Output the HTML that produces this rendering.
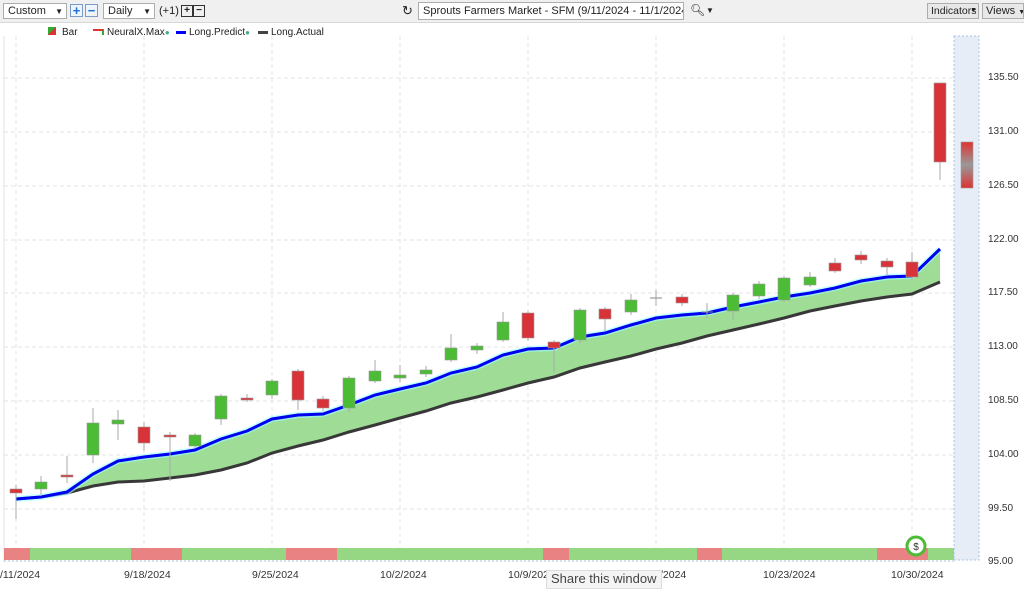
<!DOCTYPE html>
<html><head><meta charset="utf-8"><style>
body{margin:0;width:1024px;height:587px;overflow:hidden;background:#fff;font-family:"Liberation Sans",sans-serif;position:relative;white-space:nowrap}
.tb{position:absolute;left:0;top:0;width:1024px;height:22px;background:#f0f0f0;border-bottom:1px solid #d8d8d8;font-size:11px;color:#222}
.box{position:absolute;top:3px;height:16px;border:1px solid #adadad;background:#fff;line-height:15px;padding-left:4px;box-sizing:border-box;overflow:hidden}
.btn{position:absolute;top:3px;height:16px;border:1px solid #adadad;background:#e8e8e8;line-height:14px;padding:0 3px;box-sizing:border-box;overflow:hidden}
.sq{position:absolute;top:4px;width:13px;height:13px;border:1px solid #7a9cc6;background:#eef4fb;color:#1e6fd0;font-weight:bold;text-align:center;line-height:12px;font-size:13px;box-sizing:border-box}
.leg{position:absolute;top:27px;font-size:10px;color:#222}
.ax{position:absolute;left:988px;font-size:10px;color:#333}
.dt{position:absolute;top:569px;font-size:10.5px;color:#333}
</style></head><body>
<div class="tb">
<div class="box" style="left:3px;width:64px">Custom<span style="position:absolute;right:3px;font-size:8px">▼</span></div>
<div class="sq" style="left:70px">+</div><div class="sq" style="left:85px">−</div>
<div class="box" style="left:103px;width:52px">Daily<span style="position:absolute;right:3px;font-size:8px">▼</span></div>
<span style="position:absolute;left:159px;top:5px">(+1)</span>
<div style="position:absolute;left:181px;top:5px;width:10px;height:10px;border:1px solid #333;font-size:10px;line-height:9px;text-align:center;font-weight:bold">+</div>
<div style="position:absolute;left:193px;top:5px;width:10px;height:10px;border:1px solid #333;font-size:10px;line-height:9px;text-align:center;font-weight:bold">−</div>
<span style="position:absolute;left:402px;top:3px;font-size:13px">↻</span>
<div class="box" style="left:418px;width:266px;height:18px;top:2px;font-size:11px;line-height:17px">Sprouts Farmers Market - SFM (9/11/2024 - 11/1/2024)</div>
<span style="position:absolute;left:690px;top:3px;font-size:12px">🔍︎</span><span style="position:absolute;left:706px;top:6px;font-size:8px">▼</span>
<div class="btn" style="left:927px;width:52px;font-size:10.5px">Indicators<span style="position:absolute;right:1px;font-size:7px">▼</span></div>
<div class="btn" style="left:982px;width:42px">Views <span style="font-size:7px">▼</span></div>
</div>
<div class="leg" style="left:48px"><span style="display:inline-block;width:8px;height:8px;background:linear-gradient(135deg,#3a3 50%,#d33 50%);margin-right:6px"></span>Bar</div>
<div class="leg" style="left:93px"><span style="display:inline-block;width:9px;height:4px;border-top:2px solid #d33;border-right:2px solid #3a3;margin-right:3px"></span>NeuralX.Max<span style="color:#4a8;font-size:8px">●</span></div>
<div class="leg" style="left:176px"><span style="display:inline-block;width:10px;height:3px;background:#00f;margin-right:3px;vertical-align:middle"></span>Long.Predict<span style="color:#4a8;font-size:8px">●</span></div>
<div class="leg" style="left:258px"><span style="display:inline-block;width:10px;height:3px;background:#444;margin-right:3px;vertical-align:middle"></span>Long.Actual</div>
<svg id="c" width="1024" height="587" style="position:absolute;left:0;top:0"></svg>
<div class="ax" style="top:72px">135.50</div><div class="ax" style="top:126px">131.00</div><div class="ax" style="top:180px">126.50</div><div class="ax" style="top:234px">122.00</div><div class="ax" style="top:287px">117.50</div><div class="ax" style="top:341px">113.00</div><div class="ax" style="top:395px">108.50</div><div class="ax" style="top:449px">104.00</div><div class="ax" style="top:503px">99.50</div><div class="ax" style="top:556px">95.00</div>
<div class="dt" style="left:0">/11/2024</div><div class="dt" style="left:124px">9/18/2024</div><div class="dt" style="left:252px">9/25/2024</div><div class="dt" style="left:380px">10/2/2024</div><div class="dt" style="left:508px">10/9/202</div><div class="dt" style="left:660px">/2024</div><div class="dt" style="left:763px">10/23/2024</div><div class="dt" style="left:891px">10/30/2024</div>
<div style="position:absolute;left:546px;top:570px;width:110px;height:17px;background:#f4f4f4;border:1px solid #ddd;font-size:13px;color:#444;padding-left:4px">Share this window</div>
<script>
const s=document.getElementById('c');let h='';
h+='<rect x="954" y="36" width="25" height="524" fill="#e6edf6" stroke="#a8c4e0" stroke-dasharray="2,2"/>';
[78,132,186,240,293,347,401,455,509].forEach(y=>h+=`<line x1="4" x2="954" y1="${y}" y2="${y}" stroke="#e3e3e3" stroke-dasharray="4,3"/>`);
[16,144,272,400,528,656,784,912].forEach(x=>h+=`<line x1="${x}" x2="${x}" y1="36" y2="562" stroke="#e3e3e3" stroke-dasharray="4,3"/>`);
h+='<line x1="4" x2="4" y1="36" y2="562" stroke="#e3e3e3"/>';
const X=[16,41,67,93,118,144,170,195,221,247,272,298,323,349,375,400,426,451,477,503,528,554,580,605,631,656,682,707,733,759,784,810,835,861,887,912,940];
const P=[499,497,492,474,461,457,454,450,439,431,419,415,414,405,395,389,383,373,367,355,349,348,337,333,325,318,315,313,307,302,297,293,288,281,277,276,249];
const A=[499,497,493,486,482,481,478,475,470,463,453,446,440,432,425,418,411,403,397,390,383,377,368,362,356,349,343,336,330,324,318,311,306,301,297,294,282];
let pp=X.map((x,i)=>x+','+P[i]).join(' '),ap=X.map((x,i)=>x+','+A[i]).join(' ');
h+=`<polygon points="${pp} ${X.slice().reverse().map((x,i)=>x+','+A[A.length-1-i]).join(' ')}" fill="#9fdc96"/>`;
h+=`<polyline points="${ap}" fill="none" stroke="#383838" stroke-width="3"/>`;
h+=`<polyline points="${pp}" fill="none" stroke="#9ff" stroke-width="6" opacity=".6"/><polyline points="${pp}" fill="none" stroke="#0000f0" stroke-width="3"/>`;
const C=[['r',489,493,485,519],['g',482,489,476,496],['r',475,477,456,483],['g',423,455,408,463],['g',420,424,410,440],['r',427,443,422,451],['r',435,437,432,481],['g',435,446,433,448],['g',396,419,394,425],['r',398,399,394,402],['g',381,395,379,399],['r',371,400,369,410],['r',399,408,396,411],['g',378,408,376,412],['g',371,381,360,383],['g',375,378,365,382],['g',370,374,366,377],['g',348,360,334,362],['g',346,350,343,354],['g',322,340,312,342],['r',313,338,311,341],['r',342,348,340,372],['g',310,340,308,343],['r',309,319,307,331],['g',300,312,294,315],['x',298,299,290,306],['r',297,303,294,306],['x',312,313,303,318],['g',295,311,293,320],['g',284,296,281,299],['g',278,300,276,302],['g',277,285,272,287],['r',263,271,258,273],['r',255,260,251,264],['r',261,267,258,276],['r',262,277,252,280],['r',83,162,83,180]];
C.forEach((c,i)=>{const x=X[i],col=c[0]=='g'?'#4cbb35':c[0]=='r'?'#d9333a':'#888';
h+=`<line x1="${x}" x2="${x}" y1="${c[3]}" y2="${c[4]}" stroke="#aaa"/>`;
if(c[0]=='x')h+=`<line x1="${x-6}" x2="${x+6}" y1="${c[1]}" y2="${c[1]}" stroke="#888"/>`;
else h+=`<rect x="${x-6}" y="${c[1]}" width="12" height="${Math.max(2,c[2]-c[1])}" fill="${col}" stroke="#999" stroke-width=".6"/>`;});
h+='<defs><linearGradient id="gg" x1="0" y1="0" x2="0" y2="1"><stop offset="0" stop-color="#d33"/><stop offset=".5" stop-color="#999"/><stop offset="1" stop-color="#d33"/></linearGradient></defs><rect x="961" y="142" width="12" height="46" fill="url(#gg)" stroke="#999" stroke-width=".6"/>';
h+='<rect x="4" y="548" width="950" height="12" fill="#95d782"/>';
[[4,30],[131,182],[286,337],[543,569],[697,722],[877,928]].forEach(r=>h+=`<rect x="${r[0]}" y="548" width="${r[1]-r[0]}" height="12" fill="#e88283"/>`);
h+='<line x1="4" x2="954" y1="561" y2="561" stroke="#a8c4e0" stroke-dasharray="2,2"/>';
h+='<circle cx="916" cy="546" r="9" fill="#fff" stroke="#4cbb35" stroke-width="3"/><text x="916" y="550" font-size="10" text-anchor="middle" font-family="Liberation Sans" fill="#333">$</text>';
s.innerHTML=h;
</script>
</body></html>
